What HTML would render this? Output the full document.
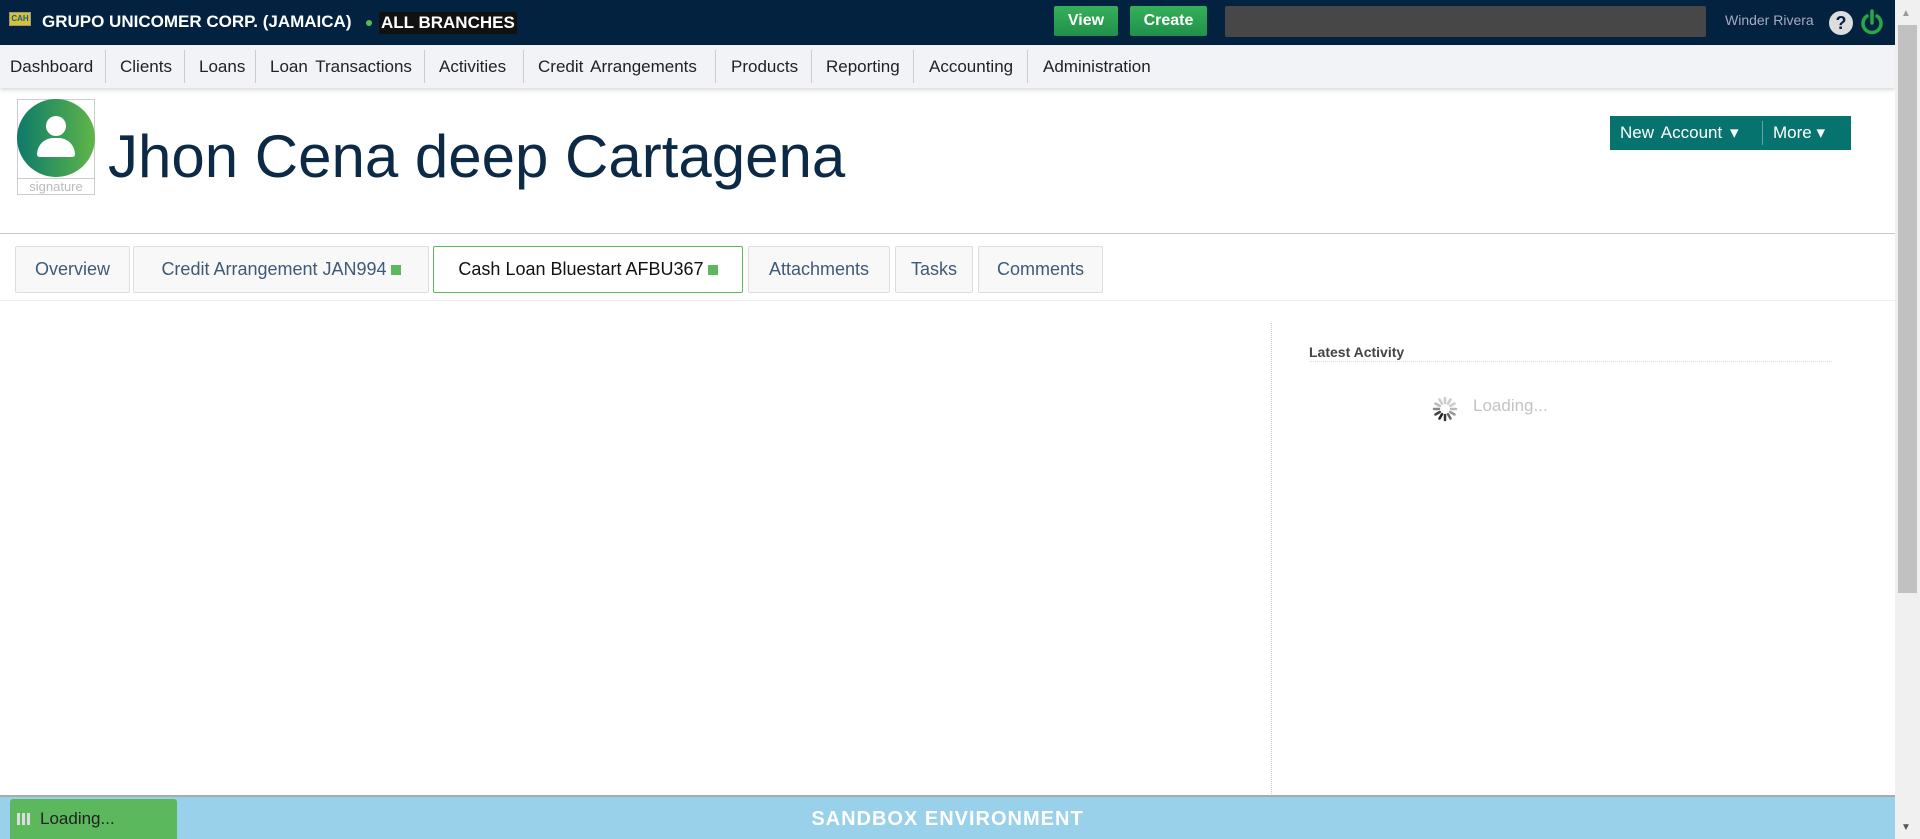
<!DOCTYPE html>
<html><head><meta charset="utf-8"><style>
*{margin:0;padding:0;box-sizing:border-box}
body{width:1920px;height:839px;overflow:hidden;background:#fff;font-family:"Liberation Sans",sans-serif;position:relative}
.abs{position:absolute}
#top{left:0;top:0;width:1895px;height:45px;background:#022240}
#nav{left:0;top:45px;width:1895px;height:43px;background:#f2f3f7;box-shadow:0 2px 4px rgba(0,0,0,.15)}
.ni{position:absolute;top:0;height:43px;line-height:43px;font-size:17px;color:#222}
.sep{position:absolute;top:5px;width:1px;height:33px;background:#ccc}
.tab{position:absolute;top:246px;height:47px;border:1px solid #ddd;background:#f8f8f8;border-radius:2px;font-size:18px;color:#3e5a76;line-height:45px;text-align:center}
.sq{display:inline-block;width:10px;height:10px;background:#5cb85c;margin-left:4px}
</style></head><body>
<div id="top" class="abs">
 <div class="abs" style="left:9px;top:12px;width:22px;height:14px;background:#d8c12a;border:1px solid #999;font-size:8px;color:#1a5aa0;font-weight:bold;line-height:12px;text-align:center">CAH</div>
 <div class="abs" style="left:42px;top:12px;color:#fff;font-weight:bold;font-size:17px">GRUPO UNICOMER CORP. (JAMAICA)</div>
 <div class="abs" style="left:366px;top:20px;width:6px;height:6px;border-radius:3px;background:#5cb85c"></div>
 <div class="abs" style="left:379px;top:12px;background:#111;color:#fff;font-weight:bold;font-size:17px;padding:1px 2px">ALL BRANCHES</div>
 <div class="abs" style="left:1054px;top:6px;width:64px;height:30px;background:linear-gradient(#36b05a,#20904a);border-radius:2px;color:#fff;font-weight:bold;font-size:16px;text-align:center;line-height:30px">View</div>
 <div class="abs" style="left:1130px;top:6px;width:77px;height:30px;background:linear-gradient(#36b05a,#20904a);border-radius:2px;color:#fff;font-weight:bold;font-size:16px;text-align:center;line-height:30px">Create</div>
 <div class="abs" style="left:1225px;top:6px;width:481px;height:31px;background:#474747;border-radius:2px"></div>
 <div class="abs" style="left:1725px;top:12px;color:#aab;font-size:14px">Winder Rivera</div>
 <div class="abs" style="left:1829px;top:11px;width:24px;height:24px;border-radius:12px;background:#ddd;color:#022240;font-weight:bold;font-size:18px;text-align:center;line-height:24px">?</div>
 <svg class="abs" style="left:1859px;top:9px" width="26" height="28" viewBox="0 0 26 28"><path d="M8 7 A9 9 0 1 0 18 7" fill="none" stroke="#27a745" stroke-width="3.5" stroke-linecap="round"/><line x1="13" y1="2" x2="13" y2="14" stroke="#27a745" stroke-width="3.5" stroke-linecap="round"/></svg>
</div>
<div id="nav" class="abs">
 <div class="ni" style="left:10px">Dashboard</div><div class="sep" style="left:105px"></div>
 <div class="ni" style="left:120px">Clients</div><div class="sep" style="left:184px"></div>
 <div class="ni" style="left:199px">Loans</div><div class="sep" style="left:255px"></div>
 <div class="ni" style="left:270px;word-spacing:3px">Loan Transactions</div><div class="sep" style="left:424px"></div>
 <div class="ni" style="left:439px">Activities</div><div class="sep" style="left:523px"></div>
 <div class="ni" style="left:538px;word-spacing:3px">Credit Arrangements</div><div class="sep" style="left:715px"></div>
 <div class="ni" style="left:731px">Products</div><div class="sep" style="left:811px"></div>
 <div class="ni" style="left:826px">Reporting</div><div class="sep" style="left:913px"></div>
 <div class="ni" style="left:929px">Accounting</div><div class="sep" style="left:1027px"></div>
 <div class="ni" style="left:1043px">Administration</div>
</div>
<div class="abs" style="left:17px;top:99px;width:78px;height:96px;border:1px solid #ccc"></div>
<div class="abs" style="left:17px;top:99px;width:78px;height:78px;border-radius:39px;background:linear-gradient(90deg,#0d7a6a,#5fb648)"></div>
<div class="abs" style="left:46px;top:116px;width:20px;height:20px;border-radius:10px;background:#fff"></div>
<div class="abs" style="left:37px;top:138px;width:38px;height:19px;border-radius:19px 19px 3px 3px;background:#fff"></div>
<div class="abs" style="left:17px;top:178px;width:78px;height:17px;border-top:1px solid #ccc;color:#bbb;font-size:13px;text-align:center;line-height:16px">signature</div>
<div class="abs" style="left:108px;top:122px;font-size:60px;color:#0c2a45;line-height:70px">Jhon Cena deep Cartagena</div>
<div class="abs" style="left:1610px;top:116px;width:241px;height:34px;background:#06736e;color:#fff;font-size:17px;line-height:34px">
 <span class="abs" style="left:10px;word-spacing:3px">New Account ▾</span>
 <span class="abs" style="left:152px;top:5px;width:1px;height:24px;background:#5aa9a5"></span>
 <span class="abs" style="left:163px">More ▾</span>
</div>
<div class="abs" style="left:0;top:233px;width:1895px;height:1px;background:#c8c8c8"></div>
<div class="tab" style="left:15px;width:115px">Overview</div>
<div class="tab" style="left:133px;width:296px">Credit Arrangement JAN994<span class="sq"></span></div>
<div class="tab" style="left:433px;width:310px;border-color:#5cb85c;background:#fff;color:#111">Cash Loan Bluestart AFBU367<span class="sq"></span></div>
<div class="tab" style="left:748px;width:142px">Attachments</div>
<div class="tab" style="left:895px;width:78px">Tasks</div>
<div class="tab" style="left:978px;width:125px">Comments</div>
<div class="abs" style="left:0;top:300px;width:1895px;height:1px;background:#eee"></div>
<div class="abs" style="left:1271px;top:323px;width:0;height:473px;border-left:1px dotted #ccc"></div>
<div class="abs" style="left:1309px;top:344px;font-size:14px;font-weight:bold;color:#444">Latest Activity</div>
<div class="abs" style="left:1309px;top:361px;width:523px;border-top:1px dotted #ddd"></div>
<svg class="abs" style="left:1431px;top:395px" width="28" height="28" viewBox="-14 -14 28 28">
 <g stroke-width="2.5" stroke-linecap="round">
 <line x1="0" y1="-6" x2="0" y2="-11" stroke="#ccc" transform="rotate(0)"/>
 <line x1="0" y1="-6" x2="0" y2="-11" stroke="#ccc" transform="rotate(30)"/>
 <line x1="0" y1="-6" x2="0" y2="-11" stroke="#ccc" transform="rotate(60)"/>
 <line x1="0" y1="-6" x2="0" y2="-11" stroke="#bbb" transform="rotate(90)"/>
 <line x1="0" y1="-6" x2="0" y2="-11" stroke="#999" transform="rotate(120)"/>
 <line x1="0" y1="-6" x2="0" y2="-11" stroke="#666" transform="rotate(150)"/>
 <line x1="0" y1="-6" x2="0" y2="-11" stroke="#333" transform="rotate(180)"/>
 <line x1="0" y1="-6" x2="0" y2="-11" stroke="#222" transform="rotate(210)"/>
 <line x1="0" y1="-6" x2="0" y2="-11" stroke="#444" transform="rotate(240)"/>
 <line x1="0" y1="-6" x2="0" y2="-11" stroke="#888" transform="rotate(270)"/>
 <line x1="0" y1="-6" x2="0" y2="-11" stroke="#bbb" transform="rotate(300)"/>
 <line x1="0" y1="-6" x2="0" y2="-11" stroke="#ccc" transform="rotate(330)"/>
 </g></svg>
<div class="abs" style="left:1473px;top:396px;font-size:17px;color:#c4c4c4">Loading...</div>
<div class="abs" style="left:0;top:795px;width:1895px;height:44px;background:#99d0ea;border-top:2px solid #aaa"></div>
<div class="abs" style="left:10px;top:799px;width:167px;height:40px;background:#5cb85c;border-radius:3px 3px 0 0;font-size:17px;color:#222;line-height:40px;padding-left:30px">Loading...</div>
<div class="abs" style="left:17px;top:813px;width:14px;height:12px;background:repeating-linear-gradient(90deg,#ddd 0 3px,transparent 3px 5px)"></div>
<div class="abs" style="left:0;top:808px;width:1895px;text-align:center;color:#fff;font-weight:bold;font-size:20px;letter-spacing:1px">SANDBOX ENVIRONMENT</div>
<div class="abs" style="left:1895px;top:0;width:25px;height:839px;background:#f0f0f0"></div>
<div class="abs" style="left:1898px;top:25px;width:19px;height:568px;background:#c1c1c1"></div>
<div class="abs" style="left:1901px;top:8px;font-size:10px;color:#999">▲</div>
<div class="abs" style="left:1901px;top:822px;font-size:10px;color:#555">▼</div>
</body></html>
